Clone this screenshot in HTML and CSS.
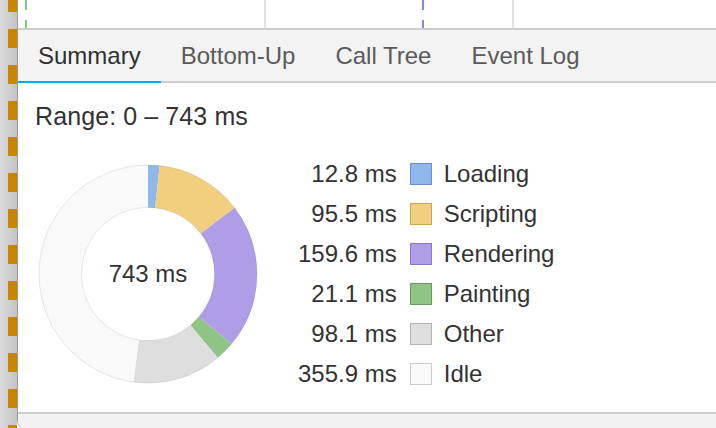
FILE: index.html
```html
<!DOCTYPE html>
<html lang="en">
<head>
<meta charset="utf-8">
<title>Summary</title>
<link rel="stylesheet" href="styles.css">
</head>
<body>
<div class="app">
  <div class="gutter"><div class="dashes"></div></div>
  <div class="panel">
    <div class="timeline">
      <span class="marker marker-green"></span>
      <span class="marker marker-grid marker-grid-1"></span>
      <span class="marker marker-blue"></span>
      <span class="marker marker-grid marker-grid-2"></span>
    </div>
    <div class="tabs">
      <div class="tab selected">Summary</div>
      <div class="tab">Bottom-Up</div>
      <div class="tab">Call Tree</div>
      <div class="tab">Event Log</div>
    </div>
    <div class="summary">
      <div class="range">Range: 0 – 743 ms</div>
      <div class="chart">
        <svg class="donut" width="220" height="220" viewBox="0 0 220 220">
          <g transform="rotate(-90 110 110)" fill="none" stroke-width="42.5">
            <circle cx="110" cy="110" r="87.75" stroke="#8fb7e9" stroke-dasharray="9.498 551.352" stroke-dashoffset="0"/>
            <circle cx="110" cy="110" r="87.75" stroke="#f2cf7e" stroke-dasharray="70.867 551.352" stroke-dashoffset="-9.498"/>
            <circle cx="110" cy="110" r="87.75" stroke="#b09de8" stroke-dasharray="118.434 551.352" stroke-dashoffset="-80.365"/>
            <circle cx="110" cy="110" r="87.75" stroke="#8fc486" stroke-dasharray="15.657 551.352" stroke-dashoffset="-198.799"/>
            <circle cx="110" cy="110" r="87.75" stroke="#dedede" stroke-dasharray="72.797 551.352" stroke-dashoffset="-214.456"/>
            <circle cx="110" cy="110" r="87.75" stroke="#f9f9f9" stroke-dasharray="264.099 551.352" stroke-dashoffset="-287.253"/>
          </g>
          <circle cx="110" cy="110" r="109" fill="none" stroke="rgba(0,0,0,0.09)" stroke-width="1"/>
          <circle cx="110" cy="110" r="66.5" fill="none" stroke="rgba(0,0,0,0.09)" stroke-width="1"/>
          <text class="donut-label" x="110" y="118.2" text-anchor="middle">743 ms</text>
        </svg>
        <div class="legend">
          <div class="value">12.8 ms</div><div class="swatch swatch-loading"></div><div class="label">Loading</div>
          <div class="value">95.5 ms</div><div class="swatch swatch-scripting"></div><div class="label">Scripting</div>
          <div class="value">159.6 ms</div><div class="swatch swatch-rendering"></div><div class="label">Rendering</div>
          <div class="value">21.1 ms</div><div class="swatch swatch-painting"></div><div class="label">Painting</div>
          <div class="value">98.1 ms</div><div class="swatch swatch-other"></div><div class="label">Other</div>
          <div class="value">355.9 ms</div><div class="swatch swatch-idle"></div><div class="label">Idle</div>
        </div>
      </div>
    </div>
    <div class="footer"></div>
  </div>
</div>
</body>
</html>
```

FILE: styles.css
```css
html, body {
  margin: 0;
  padding: 0;
  overflow: hidden;
  background: #ffffff;
}

body {
  font-family: "Liberation Sans", Arial, Helvetica, sans-serif;
  color: #333333;
}

.app {
  display: flex;
  height: 430px;
}

.gutter {
  width: 17px;
  flex: none;
  background: linear-gradient(to right, #dadada, #c4c4c4);
}

.dashes {
  margin-left: 8px;
  width: 9px;
  height: 100%;
  background: repeating-linear-gradient(to bottom, #c98500 0 12px, transparent 12px 29px, #c98500 29px 36px);
}

.panel {
  flex: 1;
  display: flex;
  flex-direction: column;
  background: #ffffff;
  border-left: 1px solid #9a9a9a;
  border-bottom-left-radius: 10px;
  overflow: hidden;
}

.timeline {
  position: relative;
  height: 28px;
  background: #ffffff;
}

.marker {
  position: absolute;
  top: 0;
  bottom: 0;
  width: 2px;
}

.marker-green {
  left: 7px;
  background: repeating-linear-gradient(to bottom, #86c786 0 10px, transparent 10px 20px);
}

.marker-blue {
  left: 404px;
  background: repeating-linear-gradient(to bottom, #8585f5 0 10px, transparent 10px 20px);
}

.marker-grid {
  background: #e2e2e2;
}

.marker-grid-1 {
  left: 246px;
}

.marker-grid-2 {
  left: 494px;
}

.tabs {
  display: flex;
  height: 51px;
  background: #f3f3f3;
  border-top: 2px solid #cecece;
  border-bottom: 2px solid #cecece;
}

.tab {
  display: flex;
  align-items: center;
  padding: 0 20px;
  font-size: 24px;
  line-height: 28px;
  color: #5a5a5a;
  border-bottom: 2px solid transparent;
  margin-bottom: -2px;
}

.tab.selected {
  color: #303030;
  border-bottom-color: #03a9f4;
}

.summary {
  height: 329px;
  box-sizing: border-box;
  padding: 19px 0 0 17px;
  background: #ffffff;
}

.range {
  font-size: 25px;
  line-height: 28px;
  letter-spacing: 0.1px;
  color: #333333;
}

.chart {
  display: flex;
  align-items: center;
  margin-top: 24px;
}

.donut {
  display: block;
  flex: none;
  margin-left: 3px;
}

.donut-label {
  font-family: "Liberation Sans", Arial, Helvetica, sans-serif;
  font-size: 24px;
  fill: #333333;
}

.legend {
  margin-left: 40px;
  display: grid;
  grid-template-columns: auto auto auto;
  grid-auto-rows: 40px;
  align-items: center;
  font-size: 24px;
  line-height: 40px;
  color: #333333;
}

.value {
  text-align: right;
  white-space: nowrap;
}

.label {
  white-space: nowrap;
}

.swatch {
  width: 20px;
  height: 20px;
  border: 1px solid;
  margin: 0 12px 0 13px;
}

.swatch-loading { background: #8fb7e9; border-color: #6d90c2; }
.swatch-scripting { background: #f2cf7e; border-color: #c9a65a; }
.swatch-rendering { background: #b09de8; border-color: #8b78c8; }
.swatch-painting { background: #8fc486; border-color: #6a9c62; }
.swatch-other { background: #dedede; border-color: #b3b3b3; }
.swatch-idle { background: #f9f9f9; border-color: #cccccc; }

.footer {
  flex: 1;
  background: #f2f2f2;
  border-top: 2px solid #cecece;
}
```
